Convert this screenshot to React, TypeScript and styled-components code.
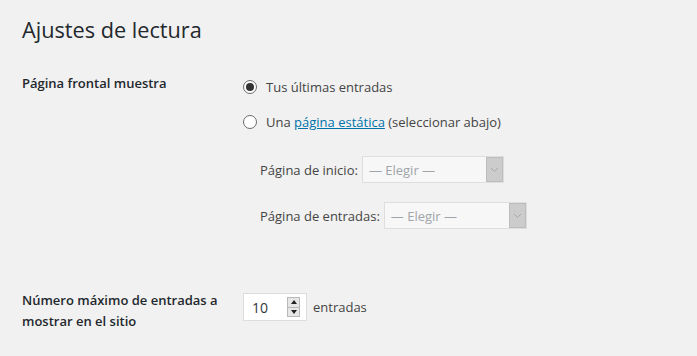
import React from "react";
import styled, { createGlobalStyle } from "styled-components";

const Global = createGlobalStyle`
  html, body { margin: 0; padding: 0; background: #f1f1f1; }
  body { font-family: "Open Sans", "Noto Sans", sans-serif; color: #444; width: 697px; height: 356px; overflow: hidden; }
`;

const Page = styled.div`
  padding: 0 22px;
`;

const Title = styled.h1`
  margin: 0;
  padding-top: 15px;
  font-size: 21.7px;
  line-height: 29px;
  font-weight: 400;
  color: #23282d;
`;

const FormTable = styled.div`
  display: grid;
  grid-template-columns: 221px 1fr;
  margin-top: 19px;
`;

const Th = styled.div<{ $top: number }>`
  padding-top: ${(p) => p.$top}px;
  font-size: 13px;
  font-weight: 600;
  line-height: 21px;
  color: #23282d;
`;

const Td = styled.div<{ $top: number }>`
  padding-top: ${(p) => p.$top}px;
  font-size: 13px;
  color: #444;
`;

const RadioLine = styled.label`
  display: flex;
  align-items: center;
  height: 18px;
  gap: 9px;
  & + & { margin-top: 17px; }
`;

const Radio = styled.span<{ $checked?: boolean }>`
  box-sizing: border-box;
  width: 14px;
  height: 14px;
  border-radius: 50%;
  border: 1px solid #6b6b6b;
  background: #fff;
  display: flex;
  align-items: center;
  justify-content: center;
  &::after {
    content: "";
    display: ${(p) => (p.$checked ? "block" : "none")};
    width: 8px;
    height: 8px;
    border-radius: 50%;
    background: #333;
  }
`;

const Link = styled.a`
  color: #0073aa;
  text-decoration: underline;
`;

const SubList = styled.div`
  padding-left: 17px;
  margin-top: 25px;
  display: flex;
  flex-direction: column;
  gap: 19px;
`;

const SubRow = styled.div`
  display: flex;
  align-items: center;
  gap: 4px;
  height: 27px;
`;

const Select = styled.div<{ $width: number }>`
  box-sizing: border-box;
  width: ${(p) => p.$width}px;
  height: 27px;
  border: 1px solid #dedede;
  background: #f7f7f7;
  display: flex;
  align-items: stretch;
`;

const SelectText = styled.span`
  flex: 1;
  display: flex;
  align-items: center;
  padding-left: 6px;
  color: #a0a5aa;
  font-size: 13px;
`;

const SelectArrow = styled.span`
  box-sizing: border-box;
  width: 17px;
  background: #cccccc;
  border: 1px solid #bdbdbd;
  display: flex;
  align-items: center;
  justify-content: center;
`;

const NumberRow = styled.div`
  display: flex;
  align-items: center;
  gap: 6px;
`;

const NumberBox = styled.div`
  box-sizing: border-box;
  width: 64px;
  height: 28px;
  border: 1px solid #dddddd;
  background: #fff;
  display: flex;
  align-items: center;
  padding-left: 8px;
  padding-right: 6px;
  font-size: 14px;
  color: #32373c;
`;

const NumberValue = styled.span`
  flex: 1;
`;

const Spinner = styled.div`
  display: flex;
  flex-direction: column;
  width: 13px;
  height: 20px;
  border: 1px solid #b8b8b8;
  box-sizing: border-box;
`;

const SpinBtn = styled.div<{ $down?: boolean }>`
  flex: 1;
  background: #e6e6e6;
  display: flex;
  align-items: center;
  justify-content: center;
  & + & { border-top: 1px solid #b8b8b8; }
  &::after {
    content: "";
    width: 0;
    height: 0;
    border-left: 3px solid transparent;
    border-right: 3px solid transparent;
    ${(p) => (p.$down ? "border-top: 4px solid #222;" : "border-bottom: 4px solid #222;")}
  }
`;

const Chevron = () => (
  <svg width="9" height="6" viewBox="0 0 9 6">
    <path d="M1 1 L4.5 4.5 L8 1" fill="none" stroke="#a8a8a8" strokeWidth="1" />
  </svg>
);

export default function App() {
  return (
    <>
      <Global />
      <Page>
        <Title>Ajustes de lectura</Title>
        <FormTable>
          <Th $top={10}>Página frontal muestra</Th>
          <Td $top={15}>
            <RadioLine>
              <Radio $checked />
              <span>Tus últimas entradas</span>
            </RadioLine>
            <RadioLine>
              <Radio />
              <span>
                Una <Link href="#">página estática</Link> (seleccionar abajo)
              </span>
            </RadioLine>
            <SubList>
              <SubRow>
                <span>Página de inicio:</span>
                <Select $width={142}>
                  <SelectText>— Elegir —</SelectText>
                  <SelectArrow>
                    <Chevron />
                  </SelectArrow>
                </Select>
              </SubRow>
              <SubRow>
                <span>Página de entradas:</span>
                <Select $width={143}>
                  <SelectText>— Elegir —</SelectText>
                  <SelectArrow>
                    <Chevron />
                  </SelectArrow>
                </Select>
              </SubRow>
            </SubList>
          </Td>
          <Th $top={61}>
            Número máximo de entradas a
            <br />
            mostrar en el sitio
          </Th>
          <Td $top={64}>
            <NumberRow>
              <NumberBox>
                <NumberValue>10</NumberValue>
                <Spinner>
                  <SpinBtn />
                  <SpinBtn $down />
                </Spinner>
              </NumberBox>
              <span>entradas</span>
            </NumberRow>
          </Td>
        </FormTable>
      </Page>
    </>
  );
}
